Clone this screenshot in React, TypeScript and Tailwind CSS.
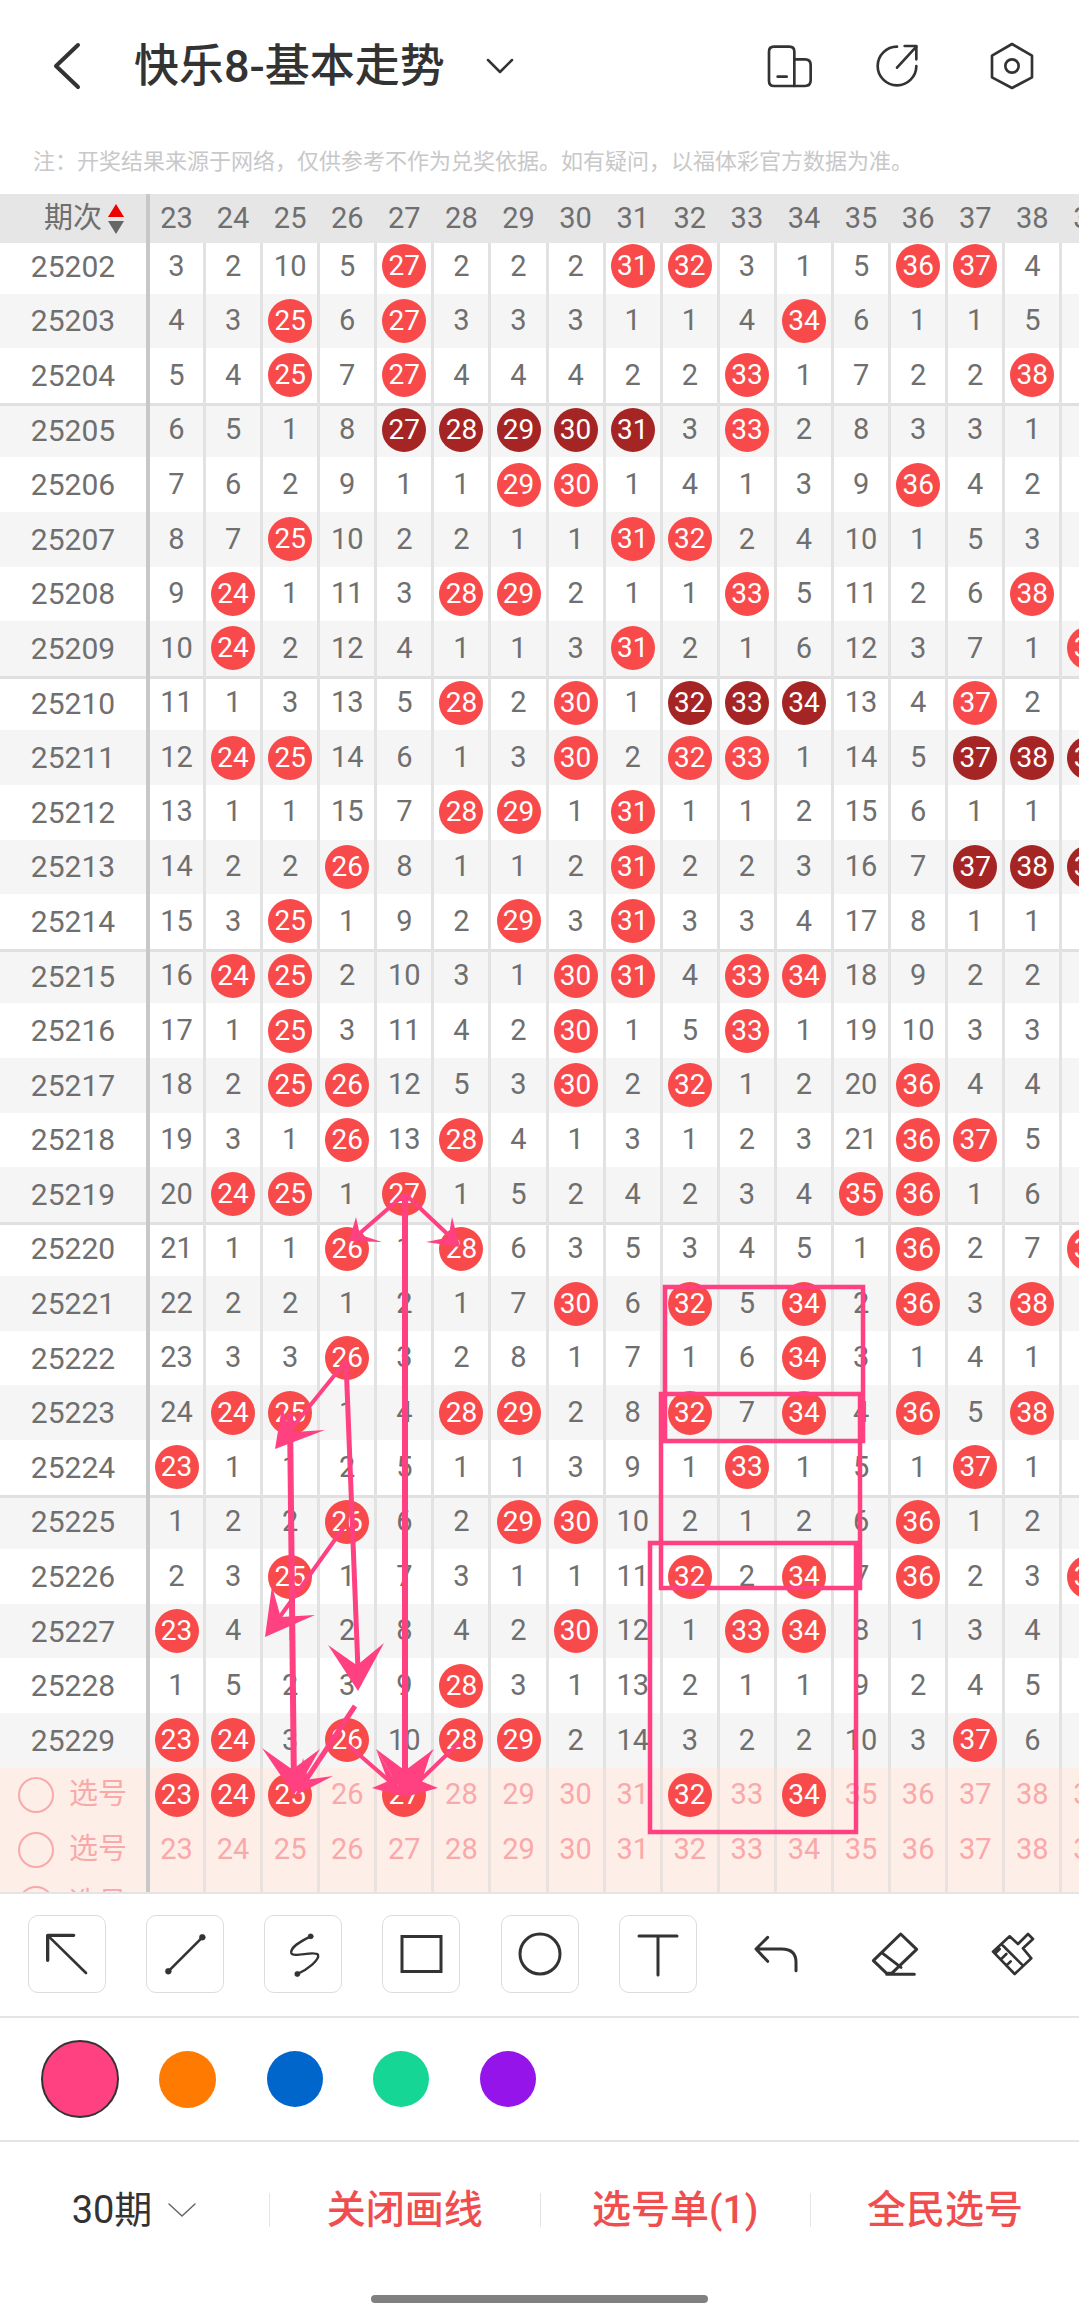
import React from 'react';

type Pt = [number, number];

const ROWS: [string, string][] = [
  ['25202', '3 2 10 5 r27 2 2 2 r31 r32 3 1 5 r36 r37 4 1'],
  ['25203', '4 3 r25 6 r27 3 3 3 1 1 4 r34 6 1 1 5 1'],
  ['25204', '5 4 r25 7 r27 4 4 4 2 2 r33 1 7 2 2 r38 1'],
  ['25205', '6 5 1 8 d27 d28 d29 d30 d31 3 r33 2 8 3 3 1 1'],
  ['25206', '7 6 2 9 1 1 r29 r30 1 4 1 3 9 r36 4 2 1'],
  ['25207', '8 7 r25 10 2 2 1 1 r31 r32 2 4 10 1 5 3 1'],
  ['25208', '9 r24 1 11 3 r28 r29 2 1 1 r33 5 11 2 6 r38 1'],
  ['25209', '10 r24 2 12 4 1 1 3 r31 2 1 6 12 3 7 1 r39'],
  ['25210', '11 1 3 13 5 r28 2 r30 1 d32 d33 d34 13 4 r37 2 1'],
  ['25211', '12 r24 r25 14 6 1 3 r30 2 r32 r33 1 14 5 d37 d38 d39'],
  ['25212', '13 1 1 15 7 r28 r29 1 r31 1 1 2 15 6 1 1 1'],
  ['25213', '14 2 2 r26 8 1 1 2 r31 2 2 3 16 7 d37 d38 d39'],
  ['25214', '15 3 r25 1 9 2 r29 3 r31 3 3 4 17 8 1 1 1'],
  ['25215', '16 r24 r25 2 10 3 1 r30 r31 4 r33 r34 18 9 2 2 2'],
  ['25216', '17 1 r25 3 11 4 2 r30 1 5 r33 1 19 10 3 3 3'],
  ['25217', '18 2 r25 r26 12 5 3 r30 2 r32 1 2 20 r36 4 4 4'],
  ['25218', '19 3 1 r26 13 r28 4 1 3 1 2 3 21 r36 r37 5 5'],
  ['25219', '20 r24 r25 1 r27 1 5 2 4 2 3 4 r35 r36 1 6 6'],
  ['25220', '21 1 1 r26 1 r28 6 3 5 3 4 5 1 r36 2 7 r39'],
  ['25221', '22 2 2 1 2 1 7 r30 6 r32 5 r34 2 r36 3 r38 1'],
  ['25222', '23 3 3 r26 3 2 8 1 7 1 6 r34 3 1 4 1 2'],
  ['25223', '24 r24 r25 1 4 r28 r29 2 8 r32 7 r34 4 r36 5 r38 3'],
  ['25224', 'r23 1 1 2 5 1 1 3 9 1 r33 1 5 1 r37 1 4'],
  ['25225', '1 2 2 r26 6 2 r29 r30 10 2 1 2 6 r36 1 2 5'],
  ['25226', '2 3 r25 1 7 3 1 1 11 r32 2 r34 7 r36 2 3 r39'],
  ['25227', 'r23 4 1 2 8 4 2 r30 12 1 r33 r34 8 1 3 4 1'],
  ['25228', '1 5 2 3 9 r28 3 1 13 2 1 1 9 2 4 5 2'],
  ['25229', 'r23 r24 3 r26 10 r28 r29 2 14 3 2 2 10 3 r37 6 3'],
];

const COLS = [23, 24, 25, 26, 27, 28, 29, 30, 31, 32, 33, 34, 35, 36, 37, 38, 39];
const PICKED = [23, 24, 25, 27, 32, 34];

// drawn lines, in page pixels
const LINES: [Pt, Pt, number][] = [
  [[405, 1194], [352, 1240], 4],
  [[405, 1194], [458, 1244], 4],
  [[405, 1194], [405, 1790], 6],
  [[348, 1745], [402, 1792], 4],
  [[460, 1742], [408, 1792], 4],
  [[346, 1361], [279, 1444], 4],
  [[346, 1361], [358, 1670], 5],
  [[290, 1414], [294, 1790], 6],
  [[355, 1706], [298, 1792], 5],
  [[344, 1527], [269, 1632], 4],
];

const HEADS: [Pt, Pt, Pt][] = [
  [[349, 1241], [356, 1217], [382, 1242]],
  [[460, 1247], [452, 1217], [426, 1242]],
  [[405, 1797], [376, 1749], [434, 1749]],
  [[405, 1797], [376, 1749], [372, 1788]],
  [[405, 1797], [432, 1749], [438, 1788]],
  [[275, 1449], [282, 1407], [325, 1430]],
  [[358, 1691], [328, 1645], [384, 1643]],
  [[294, 1795], [262, 1748], [320, 1749]],
  [[296, 1795], [333, 1776], [303, 1758]],
  [[265, 1637], [272, 1586], [315, 1615]],
];

const BOXES = [
  { x: 665, y: 1287, w: 198, h: 154 },
  { x: 661, y: 1394, w: 199, h: 194 },
  { x: 650, y: 1543, w: 206, h: 289 },
];

function headPoints([tip, a, b]: [Pt, Pt, Pt]) {
  const nx = tip[0] + 0.55 * ((a[0] + b[0]) / 2 - tip[0]);
  const ny = tip[1] + 0.55 * ((a[1] + b[1]) / 2 - tip[1]);
  return `${tip[0]},${tip[1]} ${a[0]},${a[1]} ${nx},${ny} ${b[0]},${b[1]}`;
}

function Ball({ value, dark }: { value: string; dark?: boolean }) {
  return (
    <span
      className={`flex h-[44px] w-[44px] shrink-0 items-center justify-center rounded-full text-[28px] text-white ${
        dark ? 'bg-[#a52525]' : 'bg-[#f84a4a]'
      }`}
    >
      {value}
    </span>
  );
}

function Cell({ i, children, pink }: { i: number; children?: React.ReactNode; pink?: boolean }) {
  return (
    <div
      className={`flex h-full shrink-0 items-center justify-center border-r-[3px] ${
        pink ? 'border-[#e9e2df]' : 'border-[#e2e2e2]'
      } ${i === 0 ? 'w-[56px]' : 'w-[57.1px]'}`}
    >
      {children}
    </div>
  );
}

function DataRow({ name, data, index }: { name: string; data: string; index: number }) {
  const cells = data.split(' ');
  return (
    <div
      className={`flex h-[54.6px] ${index % 2 === 1 ? 'bg-[#f5f5f5]' : 'bg-white'} ${
        (index + 2) % 5 === 0 && index > 0 ? 'shadow-[inset_0_3px_0_#e0e0e0]' : ''
      }`}
    >
      <div className="flex h-full w-[150px] shrink-0 items-center justify-center border-r-[4px] border-[#c8c8c8] text-[30px] text-[#6f6f6f]">
        {name}
      </div>
      {cells.map((c, i) => (
        <Cell key={i} i={i}>
          {c[0] === 'r' || c[0] === 'd' ? (
            <Ball value={c.slice(1)} dark={c[0] === 'd'} />
          ) : (
            <span className="text-[29px] text-[#6f6f6f]">{c}</span>
          )}
        </Cell>
      ))}
    </div>
  );
}

function PickRow({ picked }: { picked: number[] }) {
  return (
    <div className="flex h-[54.6px] bg-[#feeee8]">
      <div className="flex h-full w-[150px] shrink-0 items-center gap-[15px] border-r-[4px] border-[#c8c8c8] pl-[18px]">
        <span className="h-[36px] w-[36px] rounded-full border-[2.5px] border-[#f9a9a9]" />
        <span className="text-[29px] text-[#f9a9a9]">选号</span>
      </div>
      {COLS.map((n, i) => (
        <Cell key={n} i={i} pink>
          {picked.includes(n) ? <Ball value={String(n)} /> : <span className="text-[29px] text-[#f9a9a9]">{n}</span>}
        </Cell>
      ))}
    </div>
  );
}

function Overlay() {
  return (
    <svg className="pointer-events-none absolute left-0 top-0 h-[1698px] w-[1079px]" viewBox="0 194 1079 1698" fill="none">
      {LINES.map(([a, b, w], i) => (
        <line key={i} x1={a[0]} y1={a[1]} x2={b[0]} y2={b[1]} stroke="#ff4081" strokeWidth={w} />
      ))}
      {HEADS.map((h, i) => (
        <polygon key={i} points={headPoints(h)} fill="#ff4081" />
      ))}
      {BOXES.map((b, i) => (
        <rect key={i} x={b.x} y={b.y} width={b.w} height={b.h} stroke="#ff4081" strokeWidth={4.5} />
      ))}
    </svg>
  );
}

function TopIcon({ box, children }: { box: string; children: React.ReactNode }) {
  return (
    <svg className="h-[48px] w-[48px]" viewBox={box} fill="none" stroke="#333" strokeWidth={8} strokeLinecap="round" strokeLinejoin="round">
      {children}
    </svg>
  );
}

function ToolButton({ children, box = '0 0 54 54', bordered = true }: { children: React.ReactNode; box?: string; bordered?: boolean }) {
  return (
    <div
      className={`flex h-[78px] w-[78px] shrink-0 items-center justify-center rounded-[10px] ${
        bordered ? 'border-[1.5px] border-[#dcdcdc]' : ''
      }`}
    >
      <svg className="h-[54px] w-[54px]" viewBox={box} fill="none" stroke="#333" strokeLinecap="round" strokeLinejoin="round">
        {children}
      </svg>
    </div>
  );
}

export default function App() {
  return (
    <div className="flex h-[2324px] w-[1079px] flex-col overflow-hidden bg-white font-['Roboto','Noto_Sans_CJK_SC',sans-serif]">
      {/* top bar */}
      <div className="flex h-[132px] shrink-0 items-center pl-[49px] pr-[43px]">
        <svg className="h-[56px] w-[36px]" viewBox="0 0 36 56" fill="none" stroke="#333" strokeWidth={4} strokeLinecap="round" strokeLinejoin="round">
          <path d="M29 7 L7 28 L29 49" />
        </svg>
        <span className="ml-[49px] text-[45px] font-medium leading-none text-[#333]">快乐8-基本走势</span>
        <svg className="ml-[41px] h-[18px] w-[28px]" viewBox="0 0 28 18" fill="none" stroke="#333" strokeWidth={2.5} strokeLinecap="round" strokeLinejoin="round">
          <path d="M2 3 L14 15 L26 3" />
        </svg>
        <div className="ml-auto flex items-center">
          <TopIcon box="48 36 144 144">
            <path d="M72 50 H118 Q133 50 133 65 V168 H72 Q57 168 57 153 V65 Q57 50 72 50 Z" />
            <path d="M133 88 H165 Q182 88 182 105 V151 Q182 168 165 168 H133" />
            <path d="M83 140 H110" />
          </TopIcon>
          <div className="ml-[59px]">
            <TopIcon box="370 38 144 144">
              <path d="M442 52 A58 58 0 1 0 500 110" />
              <path d="M442 115 L500 52" />
              <path d="M465 50 H500 V90" />
            </TopIcon>
          </div>
          <div className="ml-[67px]">
            <TopIcon box="713 34 144 144">
              <path d="M785 40 L845 75 V140 L785 172 L725 140 V75 Z" />
              <circle cx="785" cy="106" r="20" />
            </TopIcon>
          </div>
        </div>
      </div>

      <div className="flex h-[62px] shrink-0 items-center pb-[3px] pl-[33px] text-[22px] text-[#c8c8c8]">
        注：开奖结果来源于网络，仅供参考不作为兑奖依据。如有疑问，以福体彩官方数据为准。
      </div>

      {/* trend table */}
      <div className="relative shrink-0">
        <div className="flex h-[49px] bg-[#e6e6e6]">
          <div className="flex h-full w-[150px] shrink-0 items-center border-r-[4px] border-[#c8c8c8] pl-[44px] text-[#6f6f6f]">
            <span className="text-[29px]">期次</span>
            <svg className="ml-[6px] h-[30px] w-[16px]" viewBox="0 0 16 30">
              <polygon points="8,0 16,13 0,13" fill="#f00000" />
              <polygon points="0,17 16,17 8,30" fill="#666" />
            </svg>
          </div>
          {COLS.map((n, i) => (
            <div key={n} className={`flex h-full shrink-0 items-center justify-center pr-[3px] text-[29px] text-[#6f6f6f] ${i === 0 ? 'w-[56px]' : 'w-[57.1px]'}`}>
              {n}
            </div>
          ))}
        </div>
        <div className="h-[1649px] overflow-hidden">
          <div className="-mt-[4px]">
            {ROWS.map(([name, data], i) => (
              <DataRow key={name} name={name} data={data} index={i} />
            ))}
            <PickRow picked={PICKED} />
            <PickRow picked={[]} />
            <PickRow picked={[]} />
          </div>
        </div>
        <Overlay />
      </div>

      {/* drawing tools */}
      <div className="flex h-[124px] shrink-0 items-center gap-[40.3px] border-t-[2px] border-[#e4e4e4] pb-[3px] pl-[27.5px]">
        <ToolButton box="59 52 162 162">
          <path d="M82 152 V77 H160" strokeWidth={10} />
          <path d="M85 80 L197 190" strokeWidth={8} />
        </ToolButton>
        <ToolButton box="412 52 162 162">
          <path d="M443 185 L545 83" strokeWidth={8} />
          <circle cx="443" cy="185" r="9" fill="#333" />
          <circle cx="545" cy="83" r="9" fill="#333" />
        </ToolButton>
        <ToolButton box="766 52 162 162">
          <path d="M870 80 C840 95 808 112 812 130 C816 146 880 122 892 135 C898 150 860 180 830 193" strokeWidth={7} />
          <circle cx="870" cy="80" r="8" fill="#333" />
          <circle cx="830" cy="193" r="8" fill="#333" />
        </ToolButton>
        <ToolButton>
          <rect x="8" y="9.5" width="39" height="35" strokeWidth={3} strokeLinejoin="miter" />
        </ToolButton>
        <ToolButton>
          <circle cx="27" cy="27" r="20" strokeWidth={3} />
        </ToolButton>
        <ToolButton>
          <path d="M8 9 H46 M27 9 V48" strokeWidth={3} />
        </ToolButton>
        <ToolButton box="24 54 162 162" bordered={false}>
          <path d="M80 85 L45 120 L80 157 M45 120 H122 Q165 120 165 160 V185" strokeWidth={9} />
        </ToolButton>
        <ToolButton box="379 51 162 162" bordered={false}>
          <path d="M477 72 L525 118 L450 190 H435 L395 152 Z M420 128 L478 172 M435 193 H518" strokeWidth={9} />
        </ToolButton>
        <ToolButton box="734 54 162 162" bordered={false}>
          <path d="M860 75 L875 90 L845 118 L870 148 L820 195 L755 128 L805 82 L830 105 Z M780 105 L845 170 M778 152 L795 135 M795 170 L808 157 M762 133 L775 120" strokeWidth={8} />
        </ToolButton>
      </div>

      {/* colours */}
      <div className="flex h-[124px] shrink-0 items-center border-t-[2px] border-[#e4e4e4] pl-[41px]">
        <span className="h-[78px] w-[78px] rounded-full border-[2px] border-[#333] bg-[#ff4081]" />
        <div className="ml-[40px] flex items-center gap-[50.5px]">
          <span className="h-[57px] w-[57px] rounded-full bg-[#ff7a00]" />
          <span className="h-[56px] w-[56px] rounded-full bg-[#0066cc]" />
          <span className="h-[56px] w-[56px] rounded-full bg-[#15d695]" />
          <span className="h-[56px] w-[56px] rounded-full bg-[#9514ea]" />
        </div>
      </div>

      {/* bottom actions */}
      <div className="grid h-[138px] shrink-0 grid-cols-[269px_270.5px_270.5px_269px] items-center border-t-[2px] border-[#e4e4e4] text-[39px] leading-none">
        <div className="flex items-center justify-center gap-[15px] text-[38px] text-[#333]">
          30期
          <svg className="h-[16px] w-[30px]" viewBox="0 0 30 16" fill="none" stroke="#666" strokeWidth={1.5} strokeLinecap="round" strokeLinejoin="round">
            <path d="M2 2 L15 14 L28 2" />
          </svg>
        </div>
        <div className="flex h-[34px] items-center justify-center border-l-[1.5px] border-[#e4e4e4] font-medium text-[#f04e4e]">关闭画线</div>
        <div className="flex h-[34px] items-center justify-center border-l-[1.5px] border-[#e4e4e4] font-medium text-[#f04e4e]">选号单(1)</div>
        <div className="flex h-[34px] items-center justify-center border-l-[1.5px] border-[#e4e4e4] font-medium text-[#f04e4e]">全民选号</div>
      </div>

      <div className="flex justify-center pt-[17px]">
        <div className="h-[8px] w-[337px] rounded-full bg-[#808080]" />
      </div>
    </div>
  );
}
